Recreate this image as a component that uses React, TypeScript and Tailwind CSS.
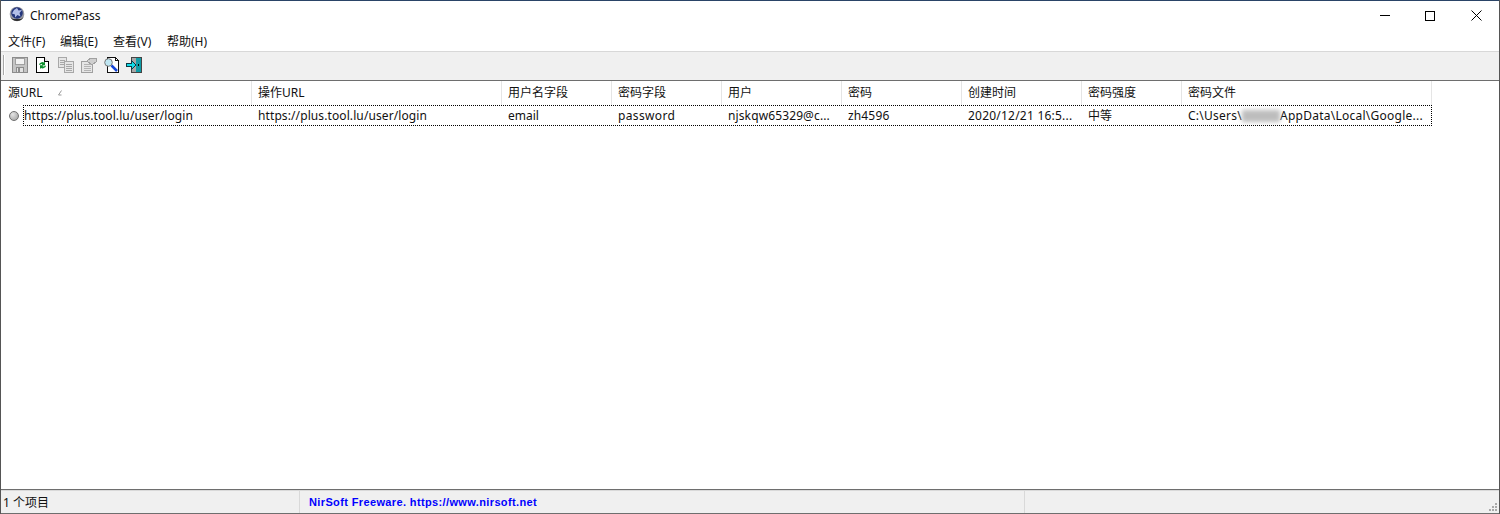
import React from 'react';

const FONT = "font-['Noto_Sans','Noto_Sans_CJK_SC',sans-serif]";

const columns = [
  { title: '源URL', width: 'w-[250px]', value: 'https://plus.tool.lu/user/login', fit: 'tracking-[0.1px]' },
  { title: '操作URL', width: 'w-[250px]', value: 'https://plus.tool.lu/user/login', fit: 'tracking-[0.1px]' },
  { title: '用户名字段', width: 'w-[110px]', value: 'email', fit: '' },
  { title: '密码字段', width: 'w-[110px]', value: 'password', fit: 'tracking-[0.35px]' },
  { title: '用户', width: 'w-[120px]', value: 'njskqw65329@c...', fit: 'tracking-[0.12px]' },
  { title: '密码', width: 'w-[120px]', value: 'zh4596', fit: 'tracking-[0.15px]' },
  { title: '创建时间', width: 'w-[120px]', value: '2020/12/21 16:5...', fit: 'tracking-[0.22px]' },
  { title: '密码强度', width: 'w-[100px]', value: '中等', fit: '' },
  { title: '密码文件', width: 'w-[250px]', value: '', fit: '' },
];

const AppIcon = () => (
  <svg width="16" height="16" viewBox="0 0 16 16">
    <circle cx="8" cy="8" r="7.300" fill="#9a9ba3" />
    <circle cx="8" cy="7" r="5.800" fill="#24367c" />
    <path d="M5 4l3-2 1.500 2.500L13 4l-2.500 3 1 3.500-3-1.500L6 11.500 6 8.500 3 7.500z" fill="#b3bfe8" />
    <path d="M1.500 11a7.300 7.300 0 0 0 13 0l-2.500 2H4z" fill="#2e2e2e" />
  </svg>
);

const SaveIcon = () => (
  <svg width="16" height="16" viewBox="0 0 16 16" shapeRendering="crispEdges">
    <path d="M.5.500h15v15H.5z" fill="#c4c4c4" stroke="#8c8c8c" />
    <path d="M3.500 1.500h9v6h-9z" fill="#f2f2f2" stroke="#a0a0a0" />
    <path d="M4.500 10.500h7v5h-7z" fill="#e2e2e2" stroke="#8c8c8c" />
    <path d="M6 11h2v4H6z" fill="#8c8c8c" />
  </svg>
);

const RefreshIcon = () => (
  <svg width="13" height="16" viewBox="0 0 13 16">
    <path d="M.5.500h8l4 4v11H.5z" fill="#fff" stroke="#000" shapeRendering="crispEdges" />
    <path d="M8.500.500v4h4" fill="#ddd" stroke="#000" shapeRendering="crispEdges" />
    <path d="M3 7.500a3.600 3.600 0 0 1 5-2l1-1v3.800H5.400l1-1a2 2 0 0 0-2.400.7z" fill="#0c8f2c" />
    <path d="M10 9a3.600 3.600 0 0 1-5 2l-1 1V8.200h3.600l-1 1a2 2 0 0 0 2.400-.7z" fill="#0c8f2c" />
  </svg>
);

const CopyIcon = () => (
  <svg width="16" height="16" viewBox="0 0 16 16" shapeRendering="crispEdges">
    <path d="M.5.500h8v10h-8z" fill="#e6e6e6" stroke="#a8a8a8" />
    <path d="M6.500 4.500h9v11h-9z" fill="#e6e6e6" stroke="#a8a8a8" />
    <path d="M2 3h5M2 5h4M2 7h4M8 7h6M8 9h6M8 11h6M8 13h6" stroke="#a8a8a8" />
  </svg>
);

const PropsIcon = () => (
  <svg width="16" height="16" viewBox="0 0 16 16" shapeRendering="crispEdges">
    <path d="M.5 4.500h11v11H.5z" fill="#e6e6e6" stroke="#a0a0a0" />
    <path d="M3 7h7M3 9h7M3 11h7M3 13h7" stroke="#b4b4b4" />
    <path d="M6 4l4-3h5v4l-4 3z" fill="#cfcfcf" stroke="#a0a0a0" />
  </svg>
);

const FindIcon = () => (
  <svg width="16" height="16" viewBox="0 0 16 16">
    <path d="M3.500.500h8l3 3v12h-11z" fill="#fff" stroke="#111" shapeRendering="crispEdges" />
    <path d="M11.500.500v3h3" fill="none" stroke="#111" shapeRendering="crispEdges" />
    <circle cx="4.500" cy="5.500" r="3.800" fill="#bfe6f2" stroke="#777" />
    <path d="M7.500 8.500l5.500 5.500" stroke="#1446d8" strokeWidth="2.500" />
  </svg>
);

const ExitIcon = () => (
  <svg width="17" height="16" viewBox="0 0 17 16" shapeRendering="crispEdges">
    <path d="M5 0h11v16H5z" fill="#444" />
    <path d="M6 1h4v14H6z" fill="#a8a8a8" />
    <path d="M10 1h5v14h-5z" fill="#0f9ca6" />
    <path d="M12 7h1v2h-1z" fill="#000" />
    <path d="M0 6h5V3h1v1h1v1h1v1h1v1h1v2H9v1H8v1H7v1H6v1H5v-3H0z" fill="#0c3a44" />
    <path d="M1 7h5V5h1v1h1v1h1v2H8v1H7v1H6V9H1z" fill="#12dbe6" />
  </svg>
);

const ToolButton = ({ children }: { children: React.ReactNode }) => (
  <div className="flex h-[24px] w-[23px] items-center justify-center">{children}</div>
);

const WindowControls = () => (
  <div className="flex h-[30px]">
    <div className="flex w-[46px] items-center justify-start pl-[19px]">
      <div className="h-px w-[10px] bg-black" />
    </div>
    <div className="flex w-[46px] items-center justify-center">
      <div className="h-[10px] w-[10px] border border-black" />
    </div>
    <div className="flex w-[46px] items-center justify-center">
      <svg width="11" height="11" viewBox="0 0 11 11" stroke="#000" strokeWidth="1">
        <path d="M.5.500l10 10M10.500.500l-10 10" />
      </svg>
    </div>
  </div>
);

export default function App() {
  return (
    <div className={`${FONT} flex h-[514px] w-[1500px] flex-col overflow-hidden border-x border-[#555] bg-white text-[12px] text-[#111]`}>
      {/* title bar */}
      <div className="flex h-[30px] items-center justify-between border-t border-[#2a4467] bg-white">
        <div className="flex items-center">
          <div className="mb-[3px] ml-[8px] mr-[5px]">
            <AppIcon />
          </div>
          <span className="text-[12px]">ChromePass</span>
        </div>
        <WindowControls />
      </div>

      {/* menu */}
      <div className="flex h-[21px] items-center pl-[7px] pt-[2px] text-[12px]">
        <span className="w-[52px]">文件(F)</span>
        <span className="w-[53px]">编辑(E)</span>
        <span className="w-[54px]">查看(V)</span>
        <span>帮助(H)</span>
      </div>

      {/* toolbar */}
      <div className="flex h-[30px] items-center border-y border-t-[#d8d8d8] border-b-[#6e6e6e] bg-[#f0f0f0] pb-[3px] pl-[2px]">
        <div className="mr-[3px] h-[20px] w-[2px] border-x border-l-[#a8a8a8] border-r-white" />
        <ToolButton><SaveIcon /></ToolButton>
        <ToolButton><RefreshIcon /></ToolButton>
        <ToolButton><CopyIcon /></ToolButton>
        <ToolButton><PropsIcon /></ToolButton>
        <ToolButton><FindIcon /></ToolButton>
        <ToolButton><ExitIcon /></ToolButton>
      </div>

      {/* list header */}
      <div className="flex h-[24px] bg-white pl-[1px]">
        {columns.map((col, i) => (
          <div key={col.title} className={`${col.width} relative flex items-center border-r border-[#e5e5e5] pl-[6px]`}>
            {col.title}
            {i === 0 && (
              <svg className="absolute left-[55px] top-[9px]" width="5" height="6" viewBox="0 0 5 6" stroke="#9a9a9a">
                <path d="M4.500.500l-3 4.500h3" fill="none" />
              </svg>
            )}
          </div>
        ))}
      </div>

      {/* list row */}
      <div className="flex-1 bg-white pl-[1px]">
        <div className="flex h-[21px]">
          <div className="flex w-[21px] items-center justify-end pr-[4px]">
            <div className="h-[10px] w-[10px] rounded-full border border-[#707070] bg-radial-[at_35%_30%] from-[#e4e4e4] to-[#9c9c9c]" />
          </div>
          <div className="flex w-[1409px] border border-dotted border-black">
            <div className="flex w-[228px] items-center tracking-[0.1px]">https://plus.tool.lu/user/login</div>
            {columns.slice(1, 8).map((col) => (
              <div key={col.title} className={`${col.width} ${col.fit} flex items-center pl-[6px]`}>{col.value}</div>
            ))}
            <div className="flex w-[249px] items-center whitespace-nowrap pl-[6px] tracking-[0.25px]">
              C:\Users\
              <span className="h-[12px] w-[38px] bg-[#bdbdbd] blur-[2px]" />
              AppData\Local\Google...
            </div>
          </div>
        </div>
      </div>

      {/* status bar */}
      <div className="flex h-[25px] border-y border-t-[#6e6e6e] border-b-[#6e6e6e] bg-[#f0f0f0]">
        <div className="flex w-[299px] items-center border-r border-t border-[#d9d9d9] pl-[2px] pt-[2px]">1 个项目</div>
        <div className="flex w-[725px] items-center border-r border-t border-[#d9d9d9] pl-[9px] font-['Liberation_Sans',sans-serif] text-[11px] font-bold tracking-[0.37px] text-[#0000ff]">
          NirSoft Freeware. https://www.nirsoft.net
        </div>
        <div className="relative flex-1 border-t border-[#d9d9d9]">
          <svg className="absolute bottom-[1px] right-[1px]" width="9" height="9" viewBox="0 0 9 9" fill="#a8a8a8" shapeRendering="crispEdges">
            <path d="M6 0h2v2H6zM3 3h2v2H3zM6 3h2v2H6zM0 6h2v2H0zM3 6h2v2H3zM6 6h2v2H6z" />
          </svg>
        </div>
      </div>
    </div>
  );
}
